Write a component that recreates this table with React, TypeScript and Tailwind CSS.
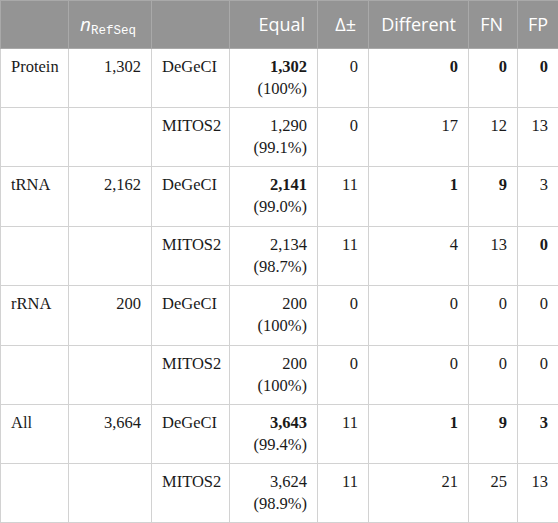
const cols = [68, 83, 78, 88, 51, 100, 49, 41];

type Row = {
  type: string;
  n: string;
  tool: string;
  equal: string;
  pct: string;
  equalBold?: boolean;
  delta: string;
  diff: [string, boolean];
  fn: [string, boolean];
  fp: [string, boolean];
};

const rows: Row[] = [
  { type: "Protein", n: "1,302", tool: "DeGeCI", equal: "1,302", pct: "(100%)", equalBold: true, delta: "0", diff: ["0", true], fn: ["0", true], fp: ["0", true] },
  { type: "", n: "", tool: "MITOS2", equal: "1,290", pct: "(99.1%)", delta: "0", diff: ["17", false], fn: ["12", false], fp: ["13", false] },
  { type: "tRNA", n: "2,162", tool: "DeGeCI", equal: "2,141", pct: "(99.0%)", equalBold: true, delta: "11", diff: ["1", true], fn: ["9", true], fp: ["3", false] },
  { type: "", n: "", tool: "MITOS2", equal: "2,134", pct: "(98.7%)", delta: "11", diff: ["4", false], fn: ["13", false], fp: ["0", true] },
  { type: "rRNA", n: "200", tool: "DeGeCI", equal: "200", pct: "(100%)", delta: "0", diff: ["0", false], fn: ["0", false], fp: ["0", false] },
  { type: "", n: "", tool: "MITOS2", equal: "200", pct: "(100%)", delta: "0", diff: ["0", false], fn: ["0", false], fp: ["0", false] },
  { type: "All", n: "3,664", tool: "DeGeCI", equal: "3,643", pct: "(99.4%)", equalBold: true, delta: "11", diff: ["1", true], fn: ["9", true], fp: ["3", true] },
  { type: "", n: "", tool: "MITOS2", equal: "3,624", pct: "(98.9%)", delta: "11", diff: ["21", false], fn: ["25", false], fp: ["13", false] },
];

const heights = [59, 59, 60, 59, 60, 59, 59, 59];

const td = "border border-[#d2d2d2] align-top pt-[7px] px-[10px] leading-[22px]";
const th = "border border-[#a9a9a9] px-[10px] font-normal text-white";

export default function App() {
  return (
    <div className="w-[558px] h-[523px] bg-white overflow-hidden">
      <table className="table-fixed border-collapse w-[558px] text-[16.5px] text-[#1a1a1a]" style={{ fontFamily: '"Liberation Serif", "Times New Roman", serif' }}>
        <colgroup>
          {cols.map((w, i) => (
            <col key={i} style={{ width: w }} />
          ))}
        </colgroup>
        <thead>
          <tr className="h-[48px] bg-[#949494] text-[18px]" style={{ fontFamily: '"Open Sans", "Noto Sans", sans-serif' }}>
            <th className={th}></th>
            <th className={`${th} text-left pl-[11px]`}>
              <span className="italic text-[19px]">n</span>
              <sub className="text-[12.5px] not-italic" style={{ fontFamily: '"Liberation Mono", "DejaVu Sans Mono", monospace' }}>RefSeq</sub>
            </th>
            <th className={th}></th>
            <th className={`${th} text-right pr-[12px]`}>Equal</th>
            <th className={`${th} text-right pr-[12px]`}>Δ±</th>
            <th className={`${th} text-right pr-[12px]`}>Different</th>
            <th className={`${th} text-right pr-[14px]`}>FN</th>
            <th className={`${th} text-right pr-[11px]`}>FP</th>
          </tr>
        </thead>
        <tbody>
          {rows.map((r, i) => (
            <tr key={i} style={{ height: heights[i] }}>
              <td className={`${td} text-left`}>{r.type}</td>
              <td className={`${td} text-right`}>{r.n}</td>
              <td className={`${td} text-left`}>{r.tool}</td>
              <td className={`${td} text-right`}>
                <div className={r.equalBold ? "font-bold" : ""}>{r.equal}</div>
                <div>{r.pct}</div>
              </td>
              <td className={`${td} text-right`}>{r.delta}</td>
              <td className={`${td} text-right ${r.diff[1] ? "font-bold" : ""}`}>{r.diff[0]}</td>
              <td className={`${td} text-right ${r.fn[1] ? "font-bold" : ""}`}>{r.fn[0]}</td>
              <td className={`${td} text-right ${r.fp[1] ? "font-bold" : ""}`}>{r.fp[0]}</td>
            </tr>
          ))}
        </tbody>
      </table>
    </div>
  );
}
